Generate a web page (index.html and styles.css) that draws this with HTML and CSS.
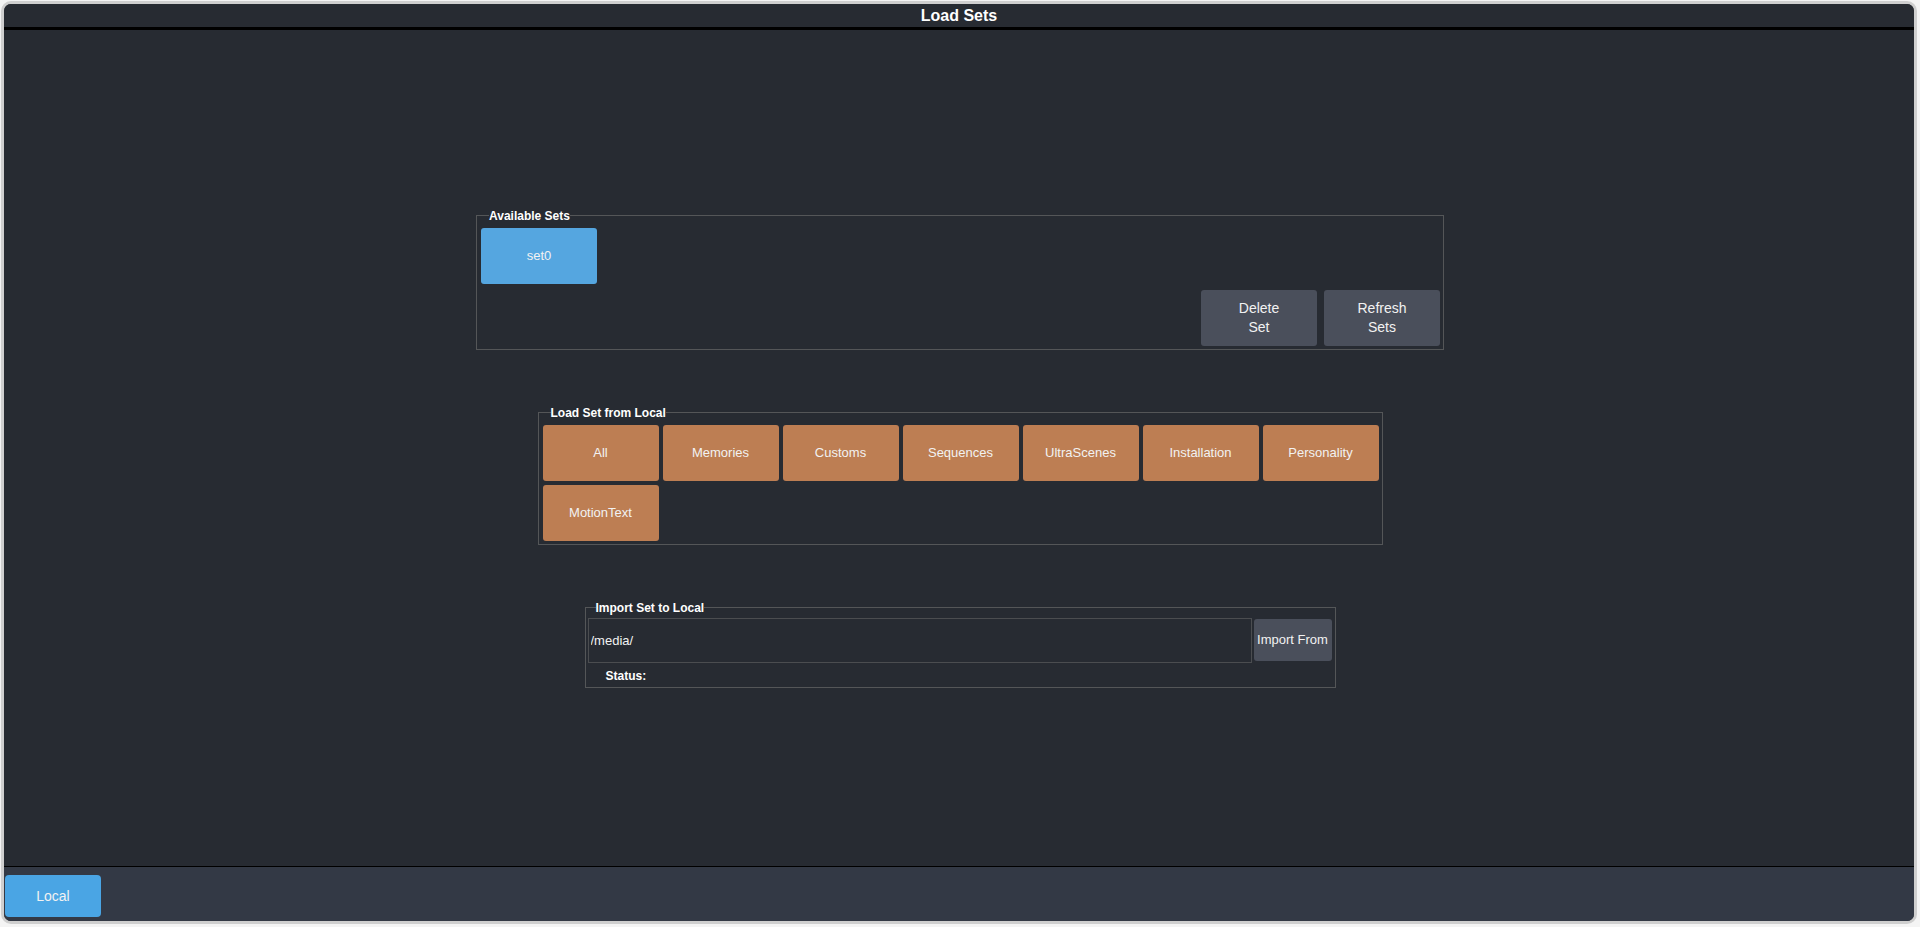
FILE: index.html
```html
<!DOCTYPE html>
<html lang="en">
  <head>
    <meta charset="UTF-8" />
    <meta name="viewport" content="width=device-width, initial-scale=1.0" />
    <title>Load Sets</title>
    <link rel="stylesheet" href="styles.css">
  </head>
  <body>
    <div class="window">
      <header>
        <h1>Load Sets</h1>
      </header>

      <main>
        <fieldset class="panel available">
          <legend>Available Sets</legend>
          <div class="set-list">
            <button class="btn btn-blue">set0</button>
          </div>
          <div class="set-actions">
            <button class="btn btn-grey">Delete<br>Set</button>
            <button class="btn btn-grey">Refresh<br>Sets</button>
          </div>
        </fieldset>

        <fieldset class="panel local">
          <legend>Load Set from Local</legend>
          <div class="load-grid">
            <button class="btn btn-orange">All</button>
            <button class="btn btn-orange">Memories</button>
            <button class="btn btn-orange">Customs</button>
            <button class="btn btn-orange">Sequences</button>
            <button class="btn btn-orange">UltraScenes</button>
            <button class="btn btn-orange">Installation</button>
            <button class="btn btn-orange">Personality</button>
            <button class="btn btn-orange">MotionText</button>
          </div>
        </fieldset>

        <fieldset class="panel import">
          <legend>Import Set to Local</legend>
          <div class="import-row">
            <input type="text" class="path-input" value="/media/" />
            <button class="btn btn-grey import-btn">Import From</button>
          </div>
          <div class="status">Status:</div>
        </fieldset>
      </main>

      <footer>
        <button class="btn btn-local">Local</button>
      </footer>
    </div>
  </body>
</html>
```

FILE: styles.css
```css
* {
  margin: 0;
  padding: 0;
  box-sizing: border-box;
}

body {
  font-family: 'Liberation Sans', Arial, sans-serif;
  background-color: #f4f4f4;
  height: 100vh;
  overflow: hidden;
}

.window {
  margin: 1px 3px 3px 1px;
  height: calc(100vh - 4px);
  border: 3px solid #cfcfcf;
  border-radius: 10px;
  overflow: hidden;
  display: flex;
  flex-direction: column;
  background-color: #272b32;
}

header {
  height: 26px;
  background-color: #272b32;
  border-bottom: 3px solid #000;
}

header h1 {
  font-size: 16px;
  line-height: 23px;
  color: #fff;
  text-align: center;
}

main {
  flex: 1;
  display: flex;
  flex-direction: column;
  align-items: center;
  justify-content: center;
  gap: 56px;
  padding-left: 2px;
}

.panel {
  border: 1px solid #545658;
  min-width: 0;
}

.panel legend {
  margin-left: 8px;
  padding: 0;
  font-size: 12px;
  line-height: 14px;
  font-weight: bold;
  color: #fff;
}

.btn {
  font-family: 'Liberation Sans', Arial, sans-serif;
  font-size: 13px;
  line-height: 16px;
  color: #f2f2f2;
  border: none;
  border-radius: 3px;
  cursor: pointer;
}

.btn-blue {
  background-color: #55a6e0;
}

.btn-grey {
  background-color: #4a4f5b;
}

.btn-orange {
  background-color: #bd7e53;
}

.available {
  width: 968px;
  padding: 5px 3px 3px 4px;
}

.available .btn {
  width: 116px;
  height: 56px;
}

.set-actions .btn {
  font-size: 14px;
  line-height: 19px;
}

.set-list {
  display: flex;
}

.set-actions {
  display: flex;
  justify-content: flex-end;
  gap: 7px;
  margin-top: 6px;
}

.local {
  width: 845px;
  padding: 5px 3px 3px 4px;
}

.load-grid {
  display: grid;
  grid-template-columns: repeat(7, 116px);
  gap: 4px;
}

.load-grid .btn {
  height: 56px;
}

.import {
  width: 751px;
  padding: 3px 2px 2px 2px;
}

.import-row {
  display: flex;
  align-items: center;
  gap: 2px;
}

.path-input {
  width: 664px;
  height: 45px;
  padding: 0 2px;
  background-color: #272b32;
  border: 1px solid #4b4d50;
  color: #f2f2f2;
  font-family: 'Liberation Sans', Arial, sans-serif;
  font-size: 13px;
  outline: none;
}

.import-btn {
  width: 78px;
  height: 42px;
}

.status {
  margin-top: 4px;
  padding-left: 18px;
  font-size: 12px;
  line-height: 18px;
  font-weight: bold;
  color: #fff;
}

footer {
  height: 55px;
  background-color: #333945;
  border-top: 1px solid #000;
  padding: 8px 0 0 1px;
}

.btn-local {
  width: 96px;
  height: 42px;
  font-size: 14px;
  border-radius: 4px;
  background-color: #4aa5e4;
}
```
